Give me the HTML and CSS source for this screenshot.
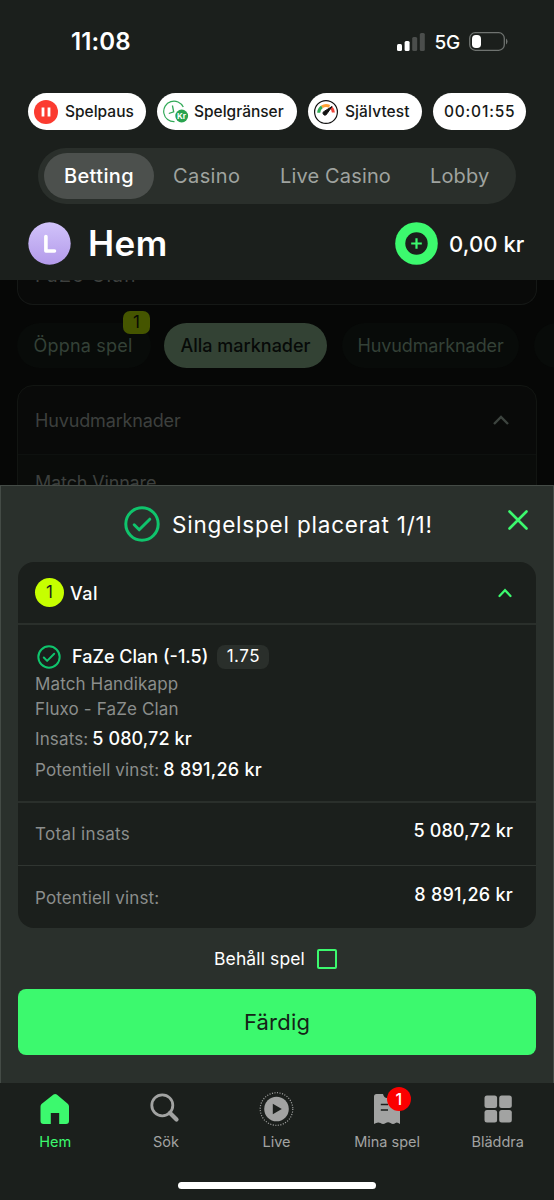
FILE: index.html
```html
<!DOCTYPE html>
<html lang="sv">
<head>
<meta charset="utf-8">
<meta name="viewport" content="width=device-width">
<title>Hem</title>
<link rel="stylesheet" href="styles.css">
</head>
<body>
<div class="app">
  <header class="header">
    <div class="status">
      <span class="clock">11:08</span>
      <div class="status-right">
        <svg class="signal" width="28" height="18" viewBox="0 0 28 18"><rect x="0" y="11" width="5" height="7" rx="1.5" fill="#fff"/><rect x="7.6" y="8" width="5" height="10" rx="1.5" fill="#fff"/><rect x="15.2" y="4" width="5" height="14" rx="1.5" fill="#4b4e4c"/><rect x="22.8" y="0" width="5" height="18" rx="1.5" fill="#4b4e4c"/></svg>
        <span class="net">5G</span>
        <svg width="39" height="19" viewBox="0 0 39 19"><rect x=".7" y=".7" width="34.6" height="17.6" rx="5.6" fill="none" stroke="#6f7370" stroke-width="1.3"/><rect x="3" y="3" width="9" height="13" rx="3.8" fill="#fff"/><path d="M37 6.6q1.5 1 1.500 2.900t-1.500 2.900z" fill="#6f7370"/></svg>
      </div>
    </div>
    <div class="pills">
      <div class="pill p1"><svg width="24" height="24" viewBox="0 0 24 24"><circle cx="12" cy="12" r="12" fill="#fb3b30"/><path d="M9 7.500v9M15 7.500v9" stroke="#fff" stroke-width="2.800"/></svg><span>Spelpaus</span></div>
      <div class="pill p2"><svg width="26" height="24" viewBox="0 0 26 24"><path d="M20.300 7A10.300 10.300 0 1 0 11.500 21.700" fill="none" stroke="#31a957" stroke-width="1.200"/><path d="M9.400 5.500L10.700 11.800L5.800 13.500" fill="none" stroke="#31a957" stroke-width="1.300"/><circle cx="18.700" cy="16" r="6.400" fill="#29a34f"/><text x="18.600" y="19.200" class="kr" text-anchor="middle">Kr</text></svg><span>Spelgränser</span></div>
      <div class="pill p3"><svg width="24" height="24" viewBox="0 0 24 24"><circle cx="12" cy="12" r="11.400" fill="#fff" stroke="#111" stroke-width="1.200"/><path d="M4.700 12.800A7.500 7.500 0 0 1 8 6.700" fill="none" stroke="#2fac55" stroke-width="3"/><path d="M8 6.700A7.500 7.500 0 0 1 15.500 6.300" fill="none" stroke="#ffa136" stroke-width="3"/><path d="M17 7.300A7.500 7.500 0 0 1 19.400 12.500" fill="none" stroke="#f0443a" stroke-width="3"/><path d="M18 6.500L12.900 13.800A2 2 0 1 1 10.500 11.200Z" fill="#111" stroke="#111"/></svg><span>Självtest</span></div>
      <div class="pill p4"><span>00:01:55</span></div>
    </div>
    <nav class="tabs"><span class="tab active">Betting</span><span class="tab t2">Casino</span><span class="tab t3">Live Casino</span><span class="tab t4">Lobby</span></nav>
    <div class="title-row">
      <svg width="43" height="43" viewBox="0 0 43 43"><defs><linearGradient id="avatar" x1="0" y1="0" x2="0" y2="1"><stop stop-color="#d1c3fa"/><stop offset="1" stop-color="#b39aea"/></linearGradient></defs><circle cx="21.500" cy="21.500" r="21.200" fill="url(#avatar)"/><path d="M17.900 14.500V29H26.500" fill="none" stroke="#fff" stroke-width="3.600" stroke-linecap="round" stroke-linejoin="round"/></svg>
      <h1>Hem</h1>
      <svg class="deposit" width="43" height="43" viewBox="0 0 43 43"><circle cx="21.500" cy="21.500" r="21.300" fill="#3cf96e"/><circle cx="21.500" cy="21.500" r="11.200" fill="#1b1f1c"/><path d="M16.200 21.500h10.600M21.500 16.200v10.600" stroke="#3cf96e" stroke-width="2.200"/></svg>
      <span class="balance">0,00 kr</span>
    </div>
  </header>

  <main class="behind">
    <div class="team-box"><span>FaZe Clan</span></div>
    <div class="chips">
      <div class="chip c1">Öppna spel<span class="chip-badge">1</span></div>
      <div class="chip c2">Alla marknader</div>
      <div class="chip c3">Huvudmarknader</div>
      <div class="chip c4"></div>
    </div>
    <section class="market">
      <div class="market-head"><span>Huvudmarknader</span><svg width="18" height="12" viewBox="0 0 18 12"><path d="M2 10L9 3L16 10" fill="none" stroke="#3d443f" stroke-width="2.400"/></svg></div>
      <div class="market-row">Match Vinnare</div>
    </section>
  </main>

  <section class="sheet">
    <div class="sheet-head">
      <svg width="36" height="36" viewBox="0 0 36 36" fill="none" stroke="#0fc46c" stroke-width="3" stroke-linecap="round" stroke-linejoin="round"><circle cx="18" cy="18" r="16.200"/><path d="M10.200 18.800L15.200 23.800L25.800 13.200"/></svg>
      <h2>Singelspel placerat 1/1!</h2>
      <svg class="close" width="20" height="20" viewBox="0 0 20 20"><path d="M1.500 1.500L18.500 18.500M18.500 1.500L1.500 18.500" stroke="#3cf96e" stroke-width="2.600" stroke-linecap="round"/></svg>
    </div>
    <div class="card">
      <div class="card-head"><span class="count">1</span><span class="val">Val</span><svg width="14" height="10" viewBox="0 0 14 10"><path d="M1.500 8L7 2.200L12.500 8" fill="none" stroke="#3cf96e" stroke-width="2.200" stroke-linecap="round"/></svg></div>
      <div class="bet">
        <div class="pick"><svg width="24" height="24" viewBox="0 0 36 36" fill="none" stroke="#0fc46c" stroke-width="3" stroke-linecap="round" stroke-linejoin="round"><circle cx="18" cy="18" r="16"/><path d="M10.200 18.800L15.200 23.800L25.800 13.200"/></svg><span class="pick-name">FaZe Clan (-1.5)</span><span class="odds">1.75</span></div>
        <div class="line l1">Match Handikapp</div>
        <div class="line l2">Fluxo - FaZe Clan</div>
        <div class="line l3"><span>Insats:</span><b>5 080,72 kr</b></div>
        <div class="line l4"><span>Potentiell vinst:</span><b>8 891,26 kr</b></div>
      </div>
      <div class="total"><span class="total-a">Total insats</span><b>5 080,72 kr</b></div>
      <div class="total last"><span class="total-b">Potentiell vinst:</span><b>8 891,26 kr</b></div>
    </div>
    <div class="keep"><span>Behåll spel</span><i class="checkbox"></i></div>
    <div class="done"><span>Färdig</span></div>
  </section>

  <nav class="bottom">
    <div class="item on"><svg width="36" height="36" viewBox="0 0 36 36"><path d="M16.500 3.500Q18.200 2.300 19.800 3.500L31 13Q32 14 32 15.500V30Q32 33 29 33H22.200V22H13.800V33H6.500Q3.500 33 3.500 30V15.500Q3.500 14 4.500 13Z" fill="#3cf96e"/></svg><span class="n1">Hem</span></div>
    <div class="item"><svg class="search" width="36" height="36" viewBox="0 0 36 36" fill="none" stroke="#a2a3a2"><circle cx="14.300" cy="14.300" r="10.500" stroke-width="2.800"/><path d="M22 22L28.500 28.500" stroke-width="4.200" stroke-linecap="round"/></svg><span class="n2">Sök</span></div>
    <div class="item"><svg width="36" height="36" viewBox="0 0 36 36"><circle cx="18.500" cy="18" r="16.300" fill="none" stroke="#a2a3a2" stroke-width="1.200" stroke-dasharray="1.100 1.460"/><circle cx="18.500" cy="18" r="12.300" fill="#a2a3a2"/><path d="M14.800 12.800V23.200L23.800 18Z" fill="#1b1f1c"/></svg><span class="n3">Live</span></div>
    <div class="item"><svg width="36" height="36" viewBox="0 0 36 36"><path d="M5 5.500Q5 3 7.500 3H14Q15 7 18 7H31V33Q28 30.500 26.500 32Q24 34 21.500 32Q19 30.500 16.800 32Q14 34 11.500 32Q8.500 30.500 5 33Z" fill="#a2a3a2"/><path d="M11.800 13.500H19M11.800 19H19" stroke="#1b1f1c" stroke-width="1.700"/></svg><span class="n4">Mina spel</span><em class="bet-badge">1</em></div>
    <div class="item"><svg width="36" height="36" viewBox="0 0 36 36" fill="#a2a3a2"><rect x="4.500" y="4.500" width="12.600" height="12.600" rx="2.500"/><rect x="19.200" y="4.500" width="12.600" height="12.600" rx="2.500"/><rect x="4.500" y="19" width="12.600" height="12.600" rx="2.500"/><rect x="19.200" y="19" width="12.600" height="12.600" rx="2.500"/></svg><span class="n5">Bläddra</span></div>
    <div class="home-bar"></div>
  </nav>
</div>
</body>
</html>
```
FILE: styles.css
```css
* { box-sizing: border-box; }
body { margin: 0; background: #1b1f1c; font-family: Inter, "Liberation Sans", sans-serif; color: #fff; }
.app { width: 554px; height: 1200px; overflow: hidden; display: flex; flex-direction: column; }
h1, h2 { margin: 0; }
svg { display: block; flex: none; }
span, b { white-space: nowrap; }

.header { height: 280px; flex: none; background: #1b1f1c; }
.status { height: 93px; padding: 32px 46px 0 71px; display: flex; justify-content: space-between; }
.clock { font-size: 24px; line-height: 20px; font-weight: 600; letter-spacing: .1px; }
.status-right { height: 19px; display: flex; align-items: center; }
.net { font-size: 19px; line-height: 19px; font-weight: 500; margin: 2px 9px 0; letter-spacing: -.2px; }
.pills { display: flex; padding-left: 28px; height: 37px; }
.pill { height: 37px; border-radius: 19px; background: #fff; color: #171917; display: flex; align-items: center; padding-left: 6px; font-size: 15.500px; font-weight: 500; }
.p1 { width: 118px; margin-right: 11px; }
.p2 { width: 140px; margin-right: 11px; }
.p3 { width: 114px; margin-right: 11px; }
.p4 { width: 93px; padding-left: 11px; letter-spacing: .8px; }
.p1 span { margin-left: 7px; }
.p2 span { margin-left: 5px; }
.p3 span { margin-left: 7px; letter-spacing: .1px; }
.kr { font: 700 8px Inter, sans-serif; fill: #fff; }
.tabs { width: 478px; height: 56px; margin: 18px 0 0 38px; border-radius: 28px; background: #2a2f2b; padding: 5px 0 0 6px; display: flex; font-size: 20px; line-height: 47px; letter-spacing: .15px; color: #9fa39f; }
.tab.active { width: 110px; height: 46px; border-radius: 23px; background: #4c504d; color: #fff; text-align: center; font-weight: 500; letter-spacing: .4px; }
.t2 { margin-left: 19px; width: 107px; letter-spacing: .4px; }
.t3 { width: 150px; }
.title-row { display: flex; align-items: center; height: 43px; margin: 18px 29px 0 28px; }
h1 { font-size: 35px; font-weight: 600; line-height: 43px; margin-left: 17px; letter-spacing: .5px; }
.deposit { margin-left: auto; }
.balance { width: 76px; margin-left: 11px; font-size: 22px; font-weight: 500; letter-spacing: .1px; }

.behind { height: 205px; flex: none; background: #060706; padding: 0 17px; overflow: hidden; color: #3d403e; }
.team-box { height: 25px; overflow: hidden; border: 1px solid #151816; border-top: 0; border-radius: 0 0 16px 16px; background: #090a09; padding-left: 17px; font-size: 19px; }
.team-box span { display: block; line-height: 20px; margin-top: -14px; letter-spacing: 1.300px; }
.chips { display: flex; margin-top: 18px; height: 45px; font-size: 18px; line-height: 45px; white-space: nowrap; }
.chip { border-radius: 23px; flex: none; text-align: center; background: #080b09; color: #344137; }
.c1 { width: 134px; position: relative; letter-spacing: .2px; padding-right: 2px; }
.c2 { width: 163px; margin-left: 13px; background: #334234; color: #070a08; font-weight: 500; }
.c3 { width: 177px; margin-left: 15px; letter-spacing: -.1px; }
.c4 { width: 60px; margin-left: 15px; }
.chip-badge { position: absolute; right: 1px; top: -12px; width: 27px; height: 23px; border-radius: 7px; background: #455500; color: #080a04; font-size: 17px; line-height: 22px; text-align: center; }
.market { margin-top: 17px; height: 130px; width: 520px; border: 1px solid #121512; border-radius: 16px; background: #090a09; overflow: hidden; font-size: 18px; letter-spacing: -.15px; }
.market-head { height: 69px; padding: 0 26px 0 17px; display: flex; justify-content: space-between; align-items: center; border-bottom: 1px solid #0e110f; }
.market-row { height: 60px; padding: 17px; line-height: 22px; background: #0a0c0a; }

.sheet { height: 598px; flex: none; background: #2a302c; border: 1px solid #444b46; border-bottom: 0; padding: 0 17px; }
.sheet-head { height: 76px; display: flex; align-items: center; padding-left: 106px; }
h2 { font-size: 22.500px; font-weight: 400; margin-left: 12px; white-space: nowrap; letter-spacing: .8px; }
.close { margin: -8px 8px 0 auto; }
.card { width: 518px; height: 366px; border-radius: 16px; background: #1b1f1c; overflow: hidden; }
.card-head { height: 63px; border-bottom: 2px solid #2a2f2b; display: flex; align-items: center; padding: 0 24px 0 17px; }
.count { width: 29px; height: 29px; border-radius: 50%; background: #c6ff00; color: #1b1f1c; text-align: center; font-size: 17px; line-height: 28px; }
.val { margin-left: 6px; margin-right: auto; font-size: 18px; font-weight: 500; letter-spacing: .5px; padding-top: 2px; }
.bet { height: 178px; border-bottom: 2px solid #2a2f2b; padding: 19px 17px 0; }
.pick { display: flex; align-items: center; height: 25px; padding-left: 2px; margin-bottom: 3px; }
.pick-name { margin-left: 11px; font-size: 18px; font-weight: 500; }
.odds { margin-left: 9px; width: 52px; height: 24px; border-radius: 8px; background: #2a2f2b; text-align: center; font-size: 17px; line-height: 23px; letter-spacing: .5px; }
.line { font-size: 17px; line-height: 25px; height: 25px; color: #8b8e8c; font-weight: 400; white-space: nowrap; letter-spacing: .13px; }
.l3, .l4 { height: 31px; line-height: 31px; margin-top: 2px; display: flex; }
.l4 { margin-top: 0; }
.line b { margin-left: 4px; color: #fff; font-size: 18px; font-weight: 500; line-height: 29px; letter-spacing: .1px; }
.l4 b { letter-spacing: .25px; }
.total { height: 63px; border-bottom: 1px solid #303531; display: flex; justify-content: space-between; align-items: center; padding: 0 23px 0 17px; font-size: 17px; color: #8b8e8c; }
.total-a { letter-spacing: .35px; }
.total-b { letter-spacing: .13px; }
.last { border: 0; }
.total b { color: #fff; font-size: 18px; font-weight: 500; padding-bottom: 7px; letter-spacing: .1px; }
.last b { letter-spacing: .25px; }
.keep { display: flex; align-items: center; height: 61px; padding-left: 196px; font-size: 17.500px; letter-spacing: .12px; }
.checkbox { width: 20px; height: 20px; margin-left: 12px; border: 2px solid #3cf96e; border-radius: 2px; }
.done { width: 518px; height: 66px; border-radius: 8px; background: #3cf96e; color: #142317; text-align: center; line-height: 66px; font-size: 22px; letter-spacing: .2px; }

.bottom { height: 117px; flex: none; background: #1b1f1c; display: grid; grid-template-columns: repeat(5, 110.600px); grid-template-rows: 102px 7px; position: relative; }
.item { display: flex; flex-direction: column; align-items: center; padding-top: 8px; color: #a2a3a2; font-size: 14.500px; line-height: 18px; position: relative; }
.item span { margin-top: 6px; }
.on { color: #3cf96e; }
.bet-badge { position: absolute; left: 55px; top: 4px; width: 24px; height: 24px; border-radius: 50%; background: #fb0000; color: #fff; text-align: center; font: 500 16px/24px Inter, sans-serif; }
.home-bar { grid-column: 1 / -1; width: 198px; height: 7px; border-radius: 4px; background: #fff; margin-left: 178px; margin-top: -3px; }
```
